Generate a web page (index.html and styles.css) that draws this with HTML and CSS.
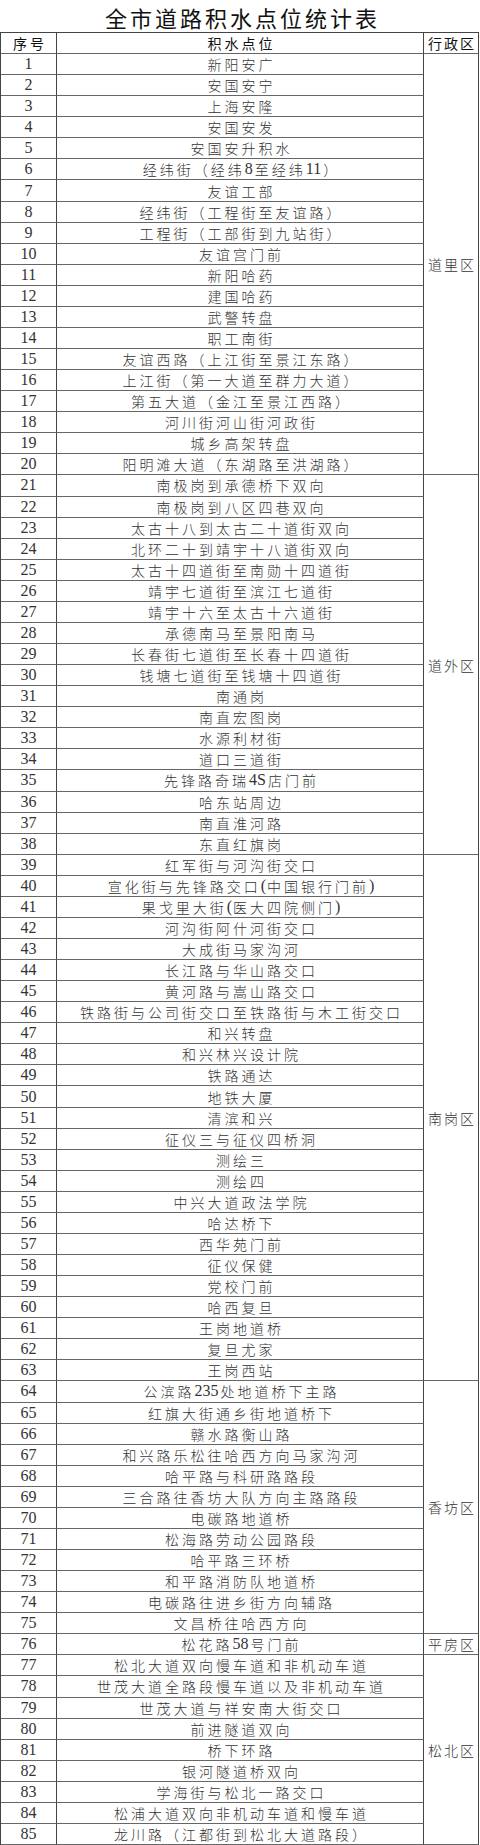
FILE: index.html
```html
<!DOCTYPE html>
<html lang="zh-CN">
<head>
<meta charset="utf-8">
<title>全市道路积水点位统计表</title>
<link rel="stylesheet" href="styles.css">
</head>
<body>
<div class="page">
  <h1 class="title">全市道路积水点位统计表</h1>
  <div class="sheet">
    <div class="cell head num">序号</div>
    <div class="cell head loc">积水点位</div>
    <div class="cell head reg">行政区</div>

    <div class="cell num">1</div><div class="cell loc">新阳安广</div>
    <div class="cell reg span20">道里区</div>
    <div class="cell num">2</div><div class="cell loc">安国安宁</div>
    <div class="cell num">3</div><div class="cell loc">上海安隆</div>
    <div class="cell num">4</div><div class="cell loc">安国安发</div>
    <div class="cell num">5</div><div class="cell loc">安国安升积水</div>
    <div class="cell num">6</div><div class="cell loc">经纬街（经纬<span class="d">8</span>至经纬<span class="d">11</span>）</div>
    <div class="cell num">7</div><div class="cell loc">友谊工部</div>
    <div class="cell num">8</div><div class="cell loc">经纬街（工程街至友谊路）</div>
    <div class="cell num">9</div><div class="cell loc">工程街（工部街到九站街）</div>
    <div class="cell num">10</div><div class="cell loc">友谊宫门前</div>
    <div class="cell num">11</div><div class="cell loc">新阳哈药</div>
    <div class="cell num">12</div><div class="cell loc">建国哈药</div>
    <div class="cell num">13</div><div class="cell loc">武警转盘</div>
    <div class="cell num">14</div><div class="cell loc">职工南街</div>
    <div class="cell num">15</div><div class="cell loc">友谊西路（上江街至景江东路）</div>
    <div class="cell num">16</div><div class="cell loc">上江街（第一大道至群力大道）</div>
    <div class="cell num">17</div><div class="cell loc">第五大道（金江至景江西路）</div>
    <div class="cell num">18</div><div class="cell loc">河川街河山街河政街</div>
    <div class="cell num">19</div><div class="cell loc">城乡高架转盘</div>
    <div class="cell num">20</div><div class="cell loc">阳明滩大道（东湖路至洪湖路）</div>

    <div class="cell num">21</div><div class="cell loc">南极岗到承德桥下双向</div>
    <div class="cell reg span18">道外区</div>
    <div class="cell num">22</div><div class="cell loc">南极岗到八区四巷双向</div>
    <div class="cell num">23</div><div class="cell loc">太古十八到太古二十道街双向</div>
    <div class="cell num">24</div><div class="cell loc">北环二十到靖宇十八道街双向</div>
    <div class="cell num">25</div><div class="cell loc">太古十四道街至南勋十四道街</div>
    <div class="cell num">26</div><div class="cell loc">靖宇七道街至滨江七道街</div>
    <div class="cell num">27</div><div class="cell loc">靖宇十六至太古十六道街</div>
    <div class="cell num">28</div><div class="cell loc">承德南马至景阳南马</div>
    <div class="cell num">29</div><div class="cell loc">长春街七道街至长春十四道街</div>
    <div class="cell num">30</div><div class="cell loc">钱塘七道街至钱塘十四道街</div>
    <div class="cell num">31</div><div class="cell loc">南通岗</div>
    <div class="cell num">32</div><div class="cell loc">南直宏图岗</div>
    <div class="cell num">33</div><div class="cell loc">水源利材街</div>
    <div class="cell num">34</div><div class="cell loc">道口三道街</div>
    <div class="cell num">35</div><div class="cell loc">先锋路奇瑞<span class="d">4S</span>店门前</div>
    <div class="cell num">36</div><div class="cell loc">哈东站周边</div>
    <div class="cell num">37</div><div class="cell loc">南直淮河路</div>
    <div class="cell num">38</div><div class="cell loc">东直红旗岗</div>

    <div class="cell num">39</div><div class="cell loc">红军街与河沟街交口</div>
    <div class="cell reg span25">南岗区</div>
    <div class="cell num">40</div><div class="cell loc">宣化街与先锋路交口<span class="p">(</span>中国银行门前<span class="p">)</span></div>
    <div class="cell num">41</div><div class="cell loc">果戈里大街<span class="p">(</span>医大四院侧门<span class="p">)</span></div>
    <div class="cell num">42</div><div class="cell loc">河沟街阿什河街交口</div>
    <div class="cell num">43</div><div class="cell loc">大成街马家沟河</div>
    <div class="cell num">44</div><div class="cell loc">长江路与华山路交口</div>
    <div class="cell num">45</div><div class="cell loc">黄河路与嵩山路交口</div>
    <div class="cell num">46</div><div class="cell loc">铁路街与公司街交口至铁路街与木工街交口</div>
    <div class="cell num">47</div><div class="cell loc">和兴转盘</div>
    <div class="cell num">48</div><div class="cell loc">和兴林兴设计院</div>
    <div class="cell num">49</div><div class="cell loc">铁路通达</div>
    <div class="cell num">50</div><div class="cell loc">地铁大厦</div>
    <div class="cell num">51</div><div class="cell loc">清滨和兴</div>
    <div class="cell num">52</div><div class="cell loc">征仪三与征仪四桥洞</div>
    <div class="cell num">53</div><div class="cell loc">测绘三</div>
    <div class="cell num">54</div><div class="cell loc">测绘四</div>
    <div class="cell num">55</div><div class="cell loc">中兴大道政法学院</div>
    <div class="cell num">56</div><div class="cell loc">哈达桥下</div>
    <div class="cell num">57</div><div class="cell loc">西华苑门前</div>
    <div class="cell num">58</div><div class="cell loc">征仪保健</div>
    <div class="cell num">59</div><div class="cell loc">党校门前</div>
    <div class="cell num">60</div><div class="cell loc">哈西复旦</div>
    <div class="cell num">61</div><div class="cell loc">王岗地道桥</div>
    <div class="cell num">62</div><div class="cell loc">复旦尤家</div>
    <div class="cell num">63</div><div class="cell loc">王岗西站</div>

    <div class="cell num">64</div><div class="cell loc">公滨路<span class="d">235</span>处地道桥下主路</div>
    <div class="cell reg span12">香坊区</div>
    <div class="cell num">65</div><div class="cell loc">红旗大街通乡街地道桥下</div>
    <div class="cell num">66</div><div class="cell loc">赣水路衡山路</div>
    <div class="cell num">67</div><div class="cell loc">和兴路乐松往哈西方向马家沟河</div>
    <div class="cell num">68</div><div class="cell loc">哈平路与科研路路段</div>
    <div class="cell num">69</div><div class="cell loc">三合路往香坊大队方向主路路段</div>
    <div class="cell num">70</div><div class="cell loc">电碳路地道桥</div>
    <div class="cell num">71</div><div class="cell loc">松海路劳动公园路段</div>
    <div class="cell num">72</div><div class="cell loc">哈平路三环桥</div>
    <div class="cell num">73</div><div class="cell loc">和平路消防队地道桥</div>
    <div class="cell num">74</div><div class="cell loc">电碳路往进乡街方向辅路</div>
    <div class="cell num">75</div><div class="cell loc">文昌桥往哈西方向</div>

    <div class="cell num">76</div><div class="cell loc">松花路<span class="d">58</span>号门前</div>
    <div class="cell reg">平房区</div>

    <div class="cell num">77</div><div class="cell loc">松北大道双向慢车道和非机动车道</div>
    <div class="cell reg span9">松北区</div>
    <div class="cell num">78</div><div class="cell loc">世茂大道全路段慢车道以及非机动车道</div>
    <div class="cell num">79</div><div class="cell loc">世茂大道与祥安南大街交口</div>
    <div class="cell num">80</div><div class="cell loc">前进隧道双向</div>
    <div class="cell num">81</div><div class="cell loc">桥下环路</div>
    <div class="cell num">82</div><div class="cell loc">银河隧道桥双向</div>
    <div class="cell num">83</div><div class="cell loc">学海街与松北一路交口</div>
    <div class="cell num">84</div><div class="cell loc">松浦大道双向非机动车道和慢车道</div>
    <div class="cell num">85</div><div class="cell loc">龙川路（江都街到松北大道路段）</div>
  </div>
</div>
</body>
</html>
```

FILE: styles.css
```css
* { box-sizing: border-box; }
html, body { margin: 0; padding: 0; background: #fff; }
body { width: 480px; }

.page { width: 480px; }

.title {
  margin: 0;
  height: 32px;
  line-height: 34px;
  text-align: center;
  font-family: "Noto Sans CJK SC", sans-serif;
  font-size: 22px;
  font-weight: 400;
  letter-spacing: 3px;
  padding-left: 5px;
  color: #111;
}

.sheet {
  display: grid;
  width: 479px;
  height: 1813px;
  grid-template-columns: 56px 367px 55px;
  grid-template-rows: repeat(86, 1fr);
  border-top: 1px solid #444;
  border-left: 1px solid #444;
}

.cell {
  display: flex;
  align-items: center;
  justify-content: center;
  border-right: 1px solid #444;
  border-bottom: 1px solid #666;
  white-space: nowrap;
  overflow: hidden;
  color: #333;
}

.num {
  grid-column: 1;
  font-family: "Liberation Serif", serif;
  font-size: 16px;
}

.loc {
  grid-column: 2;
  font-family: "Noto Sans CJK SC", sans-serif;
  font-weight: 300;
  font-size: 14px;
  letter-spacing: 3px;
  padding-left: 3px;
}

.d {
  font-family: "Liberation Serif", serif;
  font-size: 16px;
  font-weight: 400;
  letter-spacing: 0;
  margin-right: 2px;
}

.p {
  font-family: "Liberation Serif", serif;
  font-size: 16px;
  font-weight: 400;
  letter-spacing: 1px;
}

.reg {
  grid-column: 3;
  font-family: "Noto Sans CJK SC", sans-serif;
  font-weight: 300;
  font-size: 14px;
  letter-spacing: 2px;
  padding-left: 2px;
}

.head {
  font-family: "Noto Sans CJK SC", sans-serif;
  font-size: 14px;
  font-weight: 400;
  color: #111;
  letter-spacing: 3px;
  padding-left: 3px;
}
.head.reg { letter-spacing: 2px; padding-left: 2px; }

.span20 { grid-row: span 20; }
.span18 { grid-row: span 18; }
.span25 { grid-row: span 25; }
.span12 { grid-row: span 12; }
.span9 { grid-row: span 9; }
```
